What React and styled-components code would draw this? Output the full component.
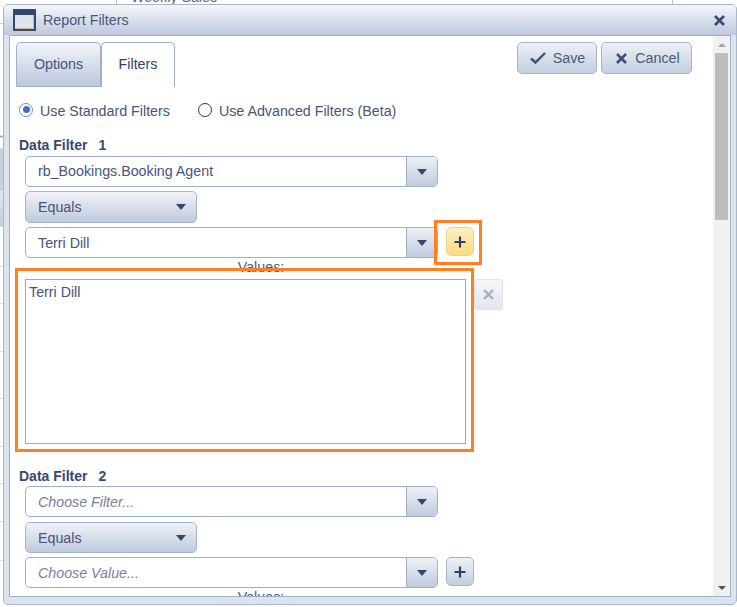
import React from "react";
import styled, { createGlobalStyle } from "styled-components";

const Global = createGlobalStyle`
  html, body { margin: 0; padding: 0; background: #fff; }
  * { box-sizing: border-box; }
`;

const Page = styled.div`
  position: relative;
  width: 737px;
  height: 607px;
  overflow: hidden;
  background: #fff;
  font-family: "Liberation Sans", Arial, sans-serif;
  font-size: 14.25px;
  color: #47557a;
`;

const TopStrip = styled.div`
  display: flex;
  height: 24px;
  border-bottom: 1px solid #c9d0dc;
`;

const TopCell = styled.div`
  width: ${(p) => p.$width}px;
  height: 5px;
  padding-left: ${(p) => p.$pad || 0}px;
  border-right: 1px solid #b9c2d0;
  overflow: hidden;
  line-height: 16px;
  color: #5a6884;
  & > span { display: block; margin-top: -11px; }
`;

const SideRow = styled.div`
  width: 3px;
  height: ${(p) => p.$height}px;
  border-bottom: 1px solid #d5dae3;
  background: ${(p) => p.$fill || "transparent"};
`;

const Dialog = styled.div`
  position: absolute;
  left: 3px;
  top: 4px;
  width: 734px;
  height: 601px;
  display: flex;
  flex-direction: column;
  background: #dbe3ef;
  border: 1px solid #a9b7cd;
  border-radius: 5px;
  padding: 0 5px 7px 5px;
`;

const TitleBar = styled.div`
  display: flex;
  align-items: center;
  height: 30px;
  margin: 0 -5px;
  padding: 0 11px 0 9px;
  background: linear-gradient(#f4f6fa, #bdc9dd);
  border-radius: 4px 4px 0 0;
  flex: none;
`;

const Title = styled.div`
  margin-left: 7px;
  color: #46567c;
  flex: 1;
`;

const Body = styled.div`
  flex: 1;
  display: flex;
  min-height: 0;
  background: #fff;
  border: 1px solid #9fb0cb;
`;

const Scroll = styled.div`
  flex: 1;
  min-width: 0;
  overflow: hidden;
  padding: 6px 21px 0 6px;
`;

const TopRow = styled.div`
  display: flex;
  align-items: flex-start;
  height: 45px;
`;

const Tab = styled.div`
  height: 45px;
  width: ${(p) => p.$width}px;
  display: flex;
  align-items: center;
  justify-content: center;
  padding-bottom: ${(p) => (p.$active ? 2 : 1)}px;
  border: 1px solid #9fb0cb;
  border-radius: 5px 5px 0 0;
  background: ${(p) => (p.$active ? "#fff" : "linear-gradient(#f2f4f8, #bcc8dc)")};
  border-bottom: ${(p) => (p.$active ? "none" : "1px solid #9fb0cb")};
  color: ${(p) => (p.$active ? "#2f4368" : "#47557a")};
`;

const Actions = styled.div`
  margin-left: auto;
  display: flex;
  gap: 4px;
`;

const ActionButton = styled.button`
  display: flex;
  align-items: center;
  justify-content: center;
  gap: ${(p) => p.$gap}px;
  width: ${(p) => p.$width}px;
  height: 32px;
  padding: 0 0 0 ${(p) => p.$pad}px;
  border: 1px solid #a3b4cf;
  border-radius: 5px;
  background: linear-gradient(#edf0f6, #c3cee0);
  font: inherit;
  color: #4b5a7d;
`;

const Form = styled.div`
  padding-left: 3px;
`;

const Radios = styled.div`
  display: flex;
  align-items: center;
  height: 18px;
  margin: 14px 0 18px;
`;

const RadioLabel = styled.label`
  display: flex;
  align-items: center;
  gap: 7px;
  margin-right: ${(p) => p.$gap || 0}px;
  color: #47557a;
`;

const RadioText = styled.span`
  padding-top: 2px;
`;

const RadioDot = styled.span`
  width: 14px;
  height: 14px;
  margin-bottom: 1px;
  border-radius: 50%;
  border: 1.5px solid ${(p) => (p.$on ? "#6f8fc8" : "#333")};
  display: flex;
  align-items: center;
  justify-content: center;
  background: #fff;
  &::after {
    content: "";
    display: ${(p) => (p.$on ? "block" : "none")};
    width: 7px;
    height: 7px;
    border-radius: 50%;
    background: #3f70bd;
  }
`;

const Filter = styled.div`
  position: relative;
  margin-bottom: 24px;
`;

const FilterTitle = styled.div`
  height: 16px;
  margin-bottom: ${(p) => p.$gap}px;
  line-height: 16px;
  font-size: 14px;
  font-weight: bold;
  color: #38496f;
  & > span { margin-left: 11px; }
`;

const Controls = styled.div`
  margin-left: 6px;
  display: flex;
  flex-direction: column;
  gap: 4px;
`;

const ComboRow = styled.div`
  display: flex;
  align-items: flex-start;
  gap: 8px;
`;

const Combo = styled.div`
  display: flex;
  width: 413px;
  height: 31px;
  border: 1px solid #9fb0cb;
  border-radius: 5px;
  overflow: hidden;
`;

const ComboText = styled.div`
  flex: 1;
  padding-left: 12px;
  line-height: ${(p) => (p.$high ? 28 : 30)}px;
  color: ${(p) => (p.$placeholder ? "#76829c" : "#47557a")};
  font-style: ${(p) => (p.$placeholder ? "italic" : "normal")};
`;

const ComboArrow = styled.div`
  flex: none;
  width: 31px;
  display: flex;
  align-items: center;
  justify-content: center;
  border-left: 1px solid #9fb0cb;
  background: linear-gradient(#eef1f6, #c0cbde);
`;

const Triangle = styled.span`
  width: 0;
  height: 0;
  border-left: ${(p) => p.$size || 5}px solid transparent;
  border-right: ${(p) => p.$size || 5}px solid transparent;
  border-top: ${(p) => (p.$size ? p.$size : 6)}px solid ${(p) => p.$color || "#35476f"};
`;

const UpTriangle = styled.span`
  width: 0;
  height: 0;
  border-left: 4px solid transparent;
  border-right: 4px solid transparent;
  border-bottom: 4px solid #a5a5a5;
`;

const Select = styled.div`
  display: flex;
  align-items: center;
  justify-content: space-between;
  width: 172px;
  height: ${(p) => p.$height}px;
  margin-top: ${(p) => p.$top || 0}px;
  padding: 0 10px 0 12px;
  border: 1px solid #a3b4cf;
  border-radius: 5px;
  background: linear-gradient(#f0f2f7, #bfcadd);
`;

const AddButton = styled.div`
  flex: none;
  width: 28px;
  height: 29px;
  display: flex;
  align-items: center;
  justify-content: center;
  border: 1px solid ${(p) => (p.$hot ? "#eed48a" : "#a3b4cf")};
  border-radius: 5px;
  background: ${(p) =>
    p.$hot ? "linear-gradient(#fdefc0, #f9db80)" : "linear-gradient(#eef1f6, #c3cee0)"};
`;

const ValuesLabel = styled.div`
  width: 472px;
  height: 16px;
  margin-top: 1px;
  text-align: center;
  line-height: 16px;
  color: #4f5b76;
`;

const ValuesRow = styled.div`
  display: flex;
  align-items: flex-start;
  gap: 8px;
`;

const ValuesBox = styled.div`
  width: 441px;
  height: 165px;
  padding: 4px 3px;
  border: 1px solid #9ba8be;
  color: #47557a;
`;

const RemoveButton = styled.div`
  width: 29px;
  height: 31px;
  display: flex;
  align-items: center;
  justify-content: center;
  border: 1px solid #dfe4ec;
  border-radius: 3px;
  background: linear-gradient(#f4f6f9, #e2e7ef);
`;

const Highlight = styled.div`
  position: absolute;
  left: ${(p) => p.$left}px;
  top: ${(p) => p.$top}px;
  width: ${(p) => p.$width}px;
  height: ${(p) => p.$height}px;
  border: 3px solid #fe7f24;
  pointer-events: none;
`;

const ScrollBar = styled.div`
  flex: none;
  width: 17px;
  display: flex;
  flex-direction: column;
  align-items: center;
  background: #f1f1f1;
`;

const ScrollEnd = styled.div`
  flex: none;
  height: 17px;
  display: flex;
  align-items: center;
  justify-content: center;
`;

const ScrollThumb = styled.div`
  width: 13px;
  height: 167px;
  background: #bdbdbd;
`;

const Spacer = styled.div`
  flex: 1;
`;

const WindowIcon = () => (
  <svg width="23" height="22" viewBox="0 0 23 22" style={{ flex: "none" }}>
    <rect x="0" y="0" width="23" height="22" fill="#34496f" />
    <rect x="2" y="6" width="19" height="14" fill="#dfe4ee" />
    <rect x="20" y="6" width="1" height="14" fill="#d8b68c" />
    <rect x="2" y="19" width="19" height="1" fill="#d8b68c" />
  </svg>
);

const CrossIcon = ({ size = 11, color = "#3a4a70", width = 2.6 }) => (
  <svg width={size} height={size} viewBox="0 0 11 11" style={{ flex: "none" }}>
    <path d="M1 1L10 10M10 1L1 10" stroke={color} strokeWidth={width} fill="none" />
  </svg>
);

const CheckIcon = () => (
  <svg width="16" height="12" viewBox="0 0 16 12" style={{ flex: "none" }}>
    <path d="M1 6.5L5.5 10.5L15 1" stroke="#3f4f77" strokeWidth="2.4" fill="none" />
  </svg>
);

const PlusIcon = () => (
  <svg width="12" height="12" viewBox="0 0 12 12">
    <path d="M6 0.5V11.5M0.5 6H11.5" stroke="#2f4168" strokeWidth="2.2" fill="none" />
  </svg>
);

const Combobox = ({ text, placeholder, high }) => (
  <Combo>
    <ComboText $placeholder={placeholder} $high={high}>{text}</ComboText>
    <ComboArrow>
      <Triangle />
    </ComboArrow>
  </Combo>
);

const sideRows = [
  { h: 112 }, { h: 2, fill: "#9a9fa8" }, { h: 11 }, { h: 42, fill: "#c9ced6" },
  { h: 36, fill: "linear-gradient(#e4e7ec, #c3cbd9)" }, { h: 40 }, { h: 37 }, { h: 48 },
  { h: 47 }, { h: 48 }, { h: 37 }, { h: 38 }, { h: 39 },
];

export default function App() {
  return (
    <Page>
      <Global />
      <TopStrip>
        <TopCell $width={117} />
        <TopCell $width={556} $pad={14}>
          <span>Weekly Sales</span>
        </TopCell>
      </TopStrip>
      {sideRows.map((r, i) => (
        <SideRow key={i} $height={r.h} $fill={r.fill} />
      ))}
      <Dialog>
        <TitleBar>
          <WindowIcon />
          <Title>Report Filters</Title>
          <CrossIcon />
        </TitleBar>
        <Body>
          <Scroll>
            <TopRow>
              <Tab $width={85}>Options</Tab>
              <Tab $width={74} $active>Filters</Tab>
              <Actions>
                <ActionButton $width={80} $gap={7} $pad={1}>
                  <CheckIcon />
                  Save
                </ActionButton>
                <ActionButton $width={91} $gap={8} $pad={3}>
                  <CrossIcon size={11} color="#3f4f77" />
                  Cancel
                </ActionButton>
              </Actions>
            </TopRow>
            <Form>
              <Radios>
                <RadioLabel $gap={28}>
                  <RadioDot $on />
                  <RadioText>Use Standard Filters</RadioText>
                </RadioLabel>
                <RadioLabel>
                  <RadioDot />
                  <RadioText>Use Advanced Filters (Beta)</RadioText>
                </RadioLabel>
              </Radios>
              <Filter>
                <FilterTitle $gap={3}>Data Filter<span>1</span></FilterTitle>
                <Controls>
                  <Combobox text="rb_Bookings.Booking Agent" high />
                  <Select $height={32}>Equals<Triangle /></Select>
                  <ComboRow>
                    <Combobox text="Terri Dill" />
                    <AddButton $hot><PlusIcon /></AddButton>
                  </ComboRow>
                </Controls>
                <Controls>
                  <ValuesLabel>Values:</ValuesLabel>
                  <ValuesRow>
                    <ValuesBox>Terri Dill</ValuesBox>
                    <RemoveButton><CrossIcon size={11} color="#a6afc0" width={2.4} /></RemoveButton>
                  </ValuesRow>
                </Controls>
                <Highlight $left={415} $top={83} $width={48} $height={45} />
                <Highlight $left={-4} $top={131} $width={459} $height={184} />
              </Filter>
              <Filter>
                <FilterTitle $gap={2}>Data Filter<span>2</span></FilterTitle>
                <Controls>
                  <Combobox text="Choose Filter..." placeholder />
                  <Select $height={31} $top={1}>Equals<Triangle /></Select>
                  <ComboRow>
                    <Combobox text="Choose Value..." placeholder />
                    <AddButton><PlusIcon /></AddButton>
                  </ComboRow>
                </Controls>
                <Controls>
                  <ValuesLabel>Values:</ValuesLabel>
                </Controls>
              </Filter>
            </Form>
          </Scroll>
          <ScrollBar>
            <ScrollEnd><UpTriangle /></ScrollEnd>
            <ScrollThumb />
            <Spacer />
            <ScrollEnd><Triangle $size={4} $color="#505050" /></ScrollEnd>
          </ScrollBar>
        </Body>
      </Dialog>
    </Page>
  );
}
